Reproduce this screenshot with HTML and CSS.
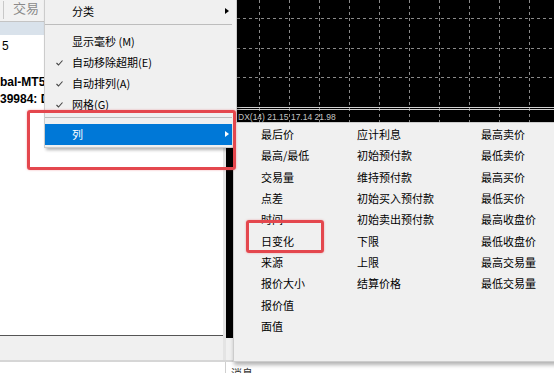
FILE: index.html
```html
<!DOCTYPE html>
<html lang="zh-CN">
<head>
    <meta charset="UTF-8">
    <meta name="viewport" content="width=device-width, initial-scale=1.0">
    <title>市场报价 - 列</title>
    <link rel="stylesheet" href="styles.css">
</head>
<body>
    <div class="workspace">
        <!-- 左侧导航窗口 -->
        <div class="left">
            <div class="tabs">
                <span class="tab">交易</span>
            </div>
            <div class="tabs-head"></div>
            <div class="list">
                <div class="row first">5</div>
                <div class="row bold gap">bal-MT5</div>
                <div class="row bold">39984: D</div>
            </div>
            <div class="left-foot"></div>
        </div>

        <!-- 图表 -->
        <div class="chart">
            <svg class="chart-grid" width="328" height="122" viewBox="0 0 328 122">
                <g stroke="#8a8a8a" stroke-width="1" stroke-dasharray="3 3">
                    <line x1="11" y1="18.5" x2="328" y2="18.5"/>
                    <line x1="11" y1="48.5" x2="328" y2="48.5"/>
                    <line x1="11" y1="77.5" x2="328" y2="77.5"/>
                    <line x1="33.5" y1="0" x2="33.5" y2="122"/>
                    <line x1="63.5" y1="0" x2="63.5" y2="122"/>
                    <line x1="93.5" y1="0" x2="93.5" y2="122"/>
                    <line x1="123.5" y1="0" x2="123.5" y2="122"/>
                    <line x1="153.5" y1="0" x2="153.5" y2="122"/>
                    <line x1="183.5" y1="0" x2="183.5" y2="122"/>
                    <line x1="213.5" y1="0" x2="213.5" y2="122"/>
                    <line x1="243.5" y1="0" x2="243.5" y2="122"/>
                    <line x1="273.5" y1="0" x2="273.5" y2="122"/>
                    <line x1="303.5" y1="0" x2="303.5" y2="122"/>
                </g>
                <line x1="0" y1="107.5" x2="328" y2="107.5" stroke="#d0d0d0"/>
                <line x1="0" y1="109.5" x2="328" y2="109.5" stroke="#d0d0d0"/>
                <text x="12" y="120" class="chart-label">DX(14) 21.15 17.14 21.98</text>
            </svg>
            <div class="chart-body"></div>
            <div class="chart-foot"></div>
        </div>
    </div>

    <div class="status">
        <div class="status-left"></div>
        <div class="status-text">消息</div>
    </div>

    <!-- 右键菜单 -->
    <div class="menu">
        <div class="menu-item">分类<span class="arrow"></span></div>
        <div class="sep"></div>
        <div class="menu-item">显示毫秒 (M)</div>
        <div class="menu-item"><svg class="check" width="7" height="6" viewBox="0 0 7 6"><polyline points="0.5,3 2.5,5 6.5,0.5" fill="none" stroke="#444" stroke-width="1.1"/></svg>自动移除超期(E)</div>
        <div class="menu-item"><svg class="check" width="7" height="6" viewBox="0 0 7 6"><polyline points="0.5,3 2.5,5 6.5,0.5" fill="none" stroke="#444" stroke-width="1.1"/></svg>自动排列(A)</div>
        <div class="menu-item"><svg class="check" width="7" height="6" viewBox="0 0 7 6"><polyline points="0.5,3 2.5,5 6.5,0.5" fill="none" stroke="#444" stroke-width="1.1"/></svg>网格(G)</div>
        <div class="sep"></div>
        <div class="menu-item active">列<span class="arrow white"></span></div>
    </div>

    <!-- 子菜单：列 -->
    <div class="submenu">
        <div class="subcol first">
            <div class="subitem">最后价</div>
            <div class="subitem">最高/最低</div>
            <div class="subitem">交易量</div>
            <div class="subitem">点差</div>
            <div class="subitem">时间</div>
            <div class="subitem">日变化</div>
            <div class="subitem">来源</div>
            <div class="subitem">报价大小</div>
            <div class="subitem">报价值</div>
            <div class="subitem">面值</div>
        </div>
        <div class="subcol second">
            <div class="subitem">应计利息</div>
            <div class="subitem">初始预付款</div>
            <div class="subitem">维持预付款</div>
            <div class="subitem">初始买入预付款</div>
            <div class="subitem">初始卖出预付款</div>
            <div class="subitem">下限</div>
            <div class="subitem">上限</div>
            <div class="subitem">结算价格</div>
        </div>
        <div class="subcol">
            <div class="subitem">最高卖价</div>
            <div class="subitem">最低卖价</div>
            <div class="subitem">最高买价</div>
            <div class="subitem">最低买价</div>
            <div class="subitem">最高收盘价</div>
            <div class="subitem">最低收盘价</div>
            <div class="subitem">最高交易量</div>
            <div class="subitem">最低交易量</div>
        </div>
    </div>

    <!-- 红框标注 -->
    <div class="mark mark-column"></div>
    <div class="mark mark-daily"></div>
</body>
</html>
```

FILE: styles.css
```css
body {
    margin: 0;
    width: 554px;
    height: 373px;
    overflow: hidden;
    position: relative;
    background: #fff;
    font-family: "Noto Sans CJK SC", "Liberation Sans", sans-serif;
    font-size: 11px;
    color: #000;
}
.workspace {
    display: grid;
    grid-template-columns: 226px 1fr;
    height: 362px;
    box-sizing: border-box;
    border-bottom: 2px solid #d6d6d6;
}

/* 左侧窗口 */
.left {
    display: flex;
    flex-direction: column;
    box-sizing: border-box;
    border-right: 3px solid #e4e4e4;
    overflow: hidden;
}
.tabs {
    height: 21px;
    background: #f2f2f2;
    border-bottom: 1px solid #c4c4c4;
    overflow: hidden;
}
.tab {
    display: inline-block;
    margin: -5px 0 0 3px;
    padding-left: 9px;
    height: 18px;
    border-left: 1px solid #c8c8c8;
    line-height: 13px;
    font-size: 13px;
    color: #8a8a8a;
}
.tabs-head {
    height: 13px;
    background: #d9e2eb;
}
.list {
    flex: 1;
    background: #fff;
}
.row {
    height: 17px;
    line-height: 17px;
    font-family: "Liberation Sans", sans-serif;
    font-size: 12px;
    white-space: nowrap;
}
.row.first {
    height: 20px;
    line-height: 20px;
    padding-top: 1px;
    padding-left: 2px;
}
.row.gap {
    margin-top: 18px;
}
.row.bold {
    font-weight: bold;
}
.left-foot {
    height: 24px;
    background: #f0f0f0;
    border-top: 1px solid #555;
}

/* 图表 */
.chart {
    display: flex;
    flex-direction: column;
    background: #000;
}
.chart-grid {
    display: block;
}
.chart-label {
    font-family: "Liberation Sans", sans-serif;
    font-size: 8.5px;
    fill: #c4c4c4;
}
.chart-body {
    flex: 1;
}
.chart-foot {
    height: 22px;
    background: #f0f0f0;
}

/* 状态栏 */
.status {
    display: flex;
    height: 11px;
}
.status-left {
    width: 226px;
    box-sizing: border-box;
    border-right: 1px solid #cfcfcf;
}
.status-text {
    padding: 5px 0 0 5px;
    line-height: 13px;
    color: #333;
}

/* 右键菜单 */
.menu {
    position: absolute;
    left: 44px;
    top: -2px;
    width: 193px;
    box-sizing: border-box;
    background: #f0f0f0;
    border: 1px solid #cccccc;
    border-top: none;
    padding: 3px 4px 2px 0;
    box-shadow: 2px 2px 3px rgba(0, 0, 0, 0.3);
}
.menu-item {
    position: relative;
    height: 21px;
    line-height: 21px;
    padding-left: 27px;
    white-space: nowrap;
}
.menu-item.active {
    background: #0078d7;
    color: #fff;
}
.check {
    position: absolute;
    left: 11px;
    top: 8px;
}
.arrow {
    position: absolute;
    right: 3px;
    top: 7px;
    width: 0;
    height: 0;
    border-top: 3.5px solid transparent;
    border-bottom: 3.5px solid transparent;
    border-left: 4px solid #000;
}
.arrow.white {
    border-left-color: #fff;
}
.sep {
    height: 1px;
    background: #bdbdbd;
    margin: 2px 0 6px;
}

/* 子菜单 */
.submenu {
    position: absolute;
    left: 233px;
    top: 122px;
    width: 330px;
    height: 240px;
    box-sizing: border-box;
    background: #f0f0f0;
    border: 1px solid #cccccc;
    padding: 1px 0 0 27px;
    display: flex;
    box-shadow: 1px 3px 4px rgba(0, 0, 0, 0.3);
}
.subcol {
    display: flex;
    flex-direction: column;
}
.subcol.first {
    width: 96px;
}
.subcol.second {
    width: 124px;
}
.subitem {
    height: 21.33px;
    line-height: 21.33px;
    white-space: nowrap;
}

/* 红框 */
.mark {
    position: absolute;
    box-sizing: border-box;
    border: 3px solid #e4474e;
    border-radius: 3px;
    box-shadow: 0 0 2px rgba(228, 71, 78, 0.5);
}
.mark-column {
    left: 27px;
    top: 110px;
    width: 209px;
    height: 60px;
}
.mark-daily {
    left: 246px;
    top: 220px;
    width: 78px;
    height: 33px;
}
```
